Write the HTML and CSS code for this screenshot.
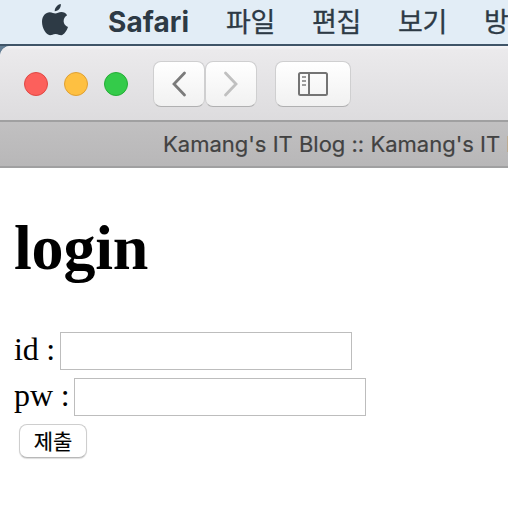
FILE: index.html
```html
<!DOCTYPE html>
<html lang="ko">
<head>
<meta charset="utf-8">
<title>login</title>
<link rel="stylesheet" href="styles.css">
</head>
<body>
<nav class="menubar">
  <svg class="apple" viewBox="0 0 26 32" width="26" height="32"><path d="M12.7 7.2C12.8 3.5 15.6.5 18.8 0C19.2 3.8 16.3 7.2 12.7 7.2ZM13.3 9.5C15 9.5 16.8 8.1 19.4 8.1C21.8 8.1 23.9 9.3 25.1 11.2C20.1 14.2 20.7 20.8 26 23C24.9 26.2 22 31.2 19.2 31.2C17.2 31.2 16.2 29.9 13.6 29.9C11 29.9 9.9 31.2 8 31.2C4.5 31.2 0 24.4 0 17.8C0 11.7 3.8 8.2 7.7 8.2C10.2 8.2 11.9 9.5 13.3 9.5Z"/></svg>
  <strong class="app">Safari</strong>
  <span class="menu">파일</span>
  <span class="menu">편집</span>
  <span class="menu">보기</span>
  <span class="menu">방</span>
</nav>
<div class="desktop">
  <section class="window">
    <header class="toolbar">
      <div class="lights">
        <i class="light red"></i><i class="light yellow"></i><i class="light green"></i>
      </div>
      <div class="history">
        <div class="tool"><svg width="16" height="26" viewBox="0 0 16 26"><path class="back" d="M13.5 2L3 13L13.5 24"/></svg></div>
        <div class="tool"><svg width="16" height="26" viewBox="0 0 16 26"><path class="forward" d="M2.5 2L13 13L2.5 24"/></svg></div>
      </div>
      <div class="tool wide"><svg width="30" height="24" viewBox="0 0 30 24"><rect class="panel" x="1" y="1" width="28" height="22" rx="1.5"/><path class="panel" d="M11 1V23"/><path class="lines" d="M4 5H8M4 9H8M4 13H8"/></svg></div>
    </header>
    <div class="tabbar"><span class="tab">Kamang's IT Blog :: Kamang's IT Blog</span></div>
    <main class="page">
      <h1 class="title">login</h1>
      <form>
        <div class="row"><label class="id" for="id">id :</label><input class="field" id="id" type="text"></div>
        <div class="row"><label class="pw" for="pw">pw :</label><input class="field" id="pw" type="password"></div>
        <button class="submit" type="button">제출</button>
      </form>
    </main>
  </section>
</div>
</body>
</html>
```
FILE: styles.css
```css
* { box-sizing: border-box; }
body {
  margin: 0;
  height: 520px;
  overflow: hidden;
  background: #fff;
  font-family: "Liberation Serif", "Noto Sans CJK KR", serif;
}
.menubar {
  display: flex;
  align-items: center;
  height: 44px;
  padding-left: 42px;
  overflow: hidden;
  background: #e2edf6;
  color: #2d3a45;
  font: 400 27px/42px "Noto Sans CJK KR", sans-serif;
  white-space: nowrap;
}
.apple {
  flex: none;
  margin: 0 40px 4px 0;
  fill: #2d3a45;
}
.app {
  flex: none;
  width: 118px;
  font: 700 28px/44px Inter, sans-serif;
  letter-spacing: 0.1px;
}
.menu {
  flex: none;
  width: 86px;
  margin-top: -2px;
  letter-spacing: -0.3px;
  -webkit-text-stroke: 0.3px #2d3a45;
}
.desktop {
  padding-top: 2px;
  background: linear-gradient(#405568, #405568 2px, #647e94 2px);
}
.window {
  overflow: hidden;
  height: 474px;
  border-top-left-radius: 10px;
  background: #fff;
}
.toolbar {
  display: flex;
  align-items: flex-start;
  height: 76px;
  padding: 15px 0 0 24px;
  border-bottom: 2px solid #a0a0a1;
  background: linear-gradient(#f6f5f7, #ebeaec 4px, #dddcde);
}
.lights {
  display: flex;
  gap: 16px;
  width: 129px;
  padding-top: 11px;
}
.light {
  width: 24px;
  height: 24px;
  border: 1px solid;
  border-radius: 50%;
}
.red { background: #fc605c; border-color: #df4844; }
.yellow { background: #fec041; border-color: #dfa033; }
.green { background: #34cb4a; border-color: #25ad36; }
.history { display: flex; margin-right: 18px; }
.tool {
  display: flex;
  align-items: center;
  justify-content: center;
  width: 52px;
  height: 46px;
  border: 1px solid #cfcfd0;
  border-bottom-color: #b0b0b1;
  border-radius: 8px;
  background: linear-gradient(#fff, #f1f1f1);
}
.wide { width: 76px; }
.tool svg { fill: none; stroke-linecap: round; }
.back { stroke: #7b7b7b; stroke-width: 2.8; }
.forward { stroke: #c0c0c0; stroke-width: 2.8; }
.panel { stroke: #747474; stroke-width: 2; }
.lines { stroke: #9b9b9b; stroke-width: 2; stroke-linecap: butt; }
.tabbar {
  height: 46px;
  padding-left: 163px;
  overflow: hidden;
  border-bottom: 2px solid #a0a0a1;
  background: linear-gradient(#c1c0c1, #b8b7b8);
  color: #424242;
  font: 400 22px/45px Inter, sans-serif;
  white-space: nowrap;
}
.tab {
  letter-spacing: 0;
  font-feature-settings: "calt" 0;
  -webkit-text-stroke: 0.2px #424242;
}
.page { padding: 43px 14px 0; color: #000; }
.title {
  margin: 0 0 47px;
  font-size: 64px;
  line-height: 74px;
  letter-spacing: -0.2px;
}
.row {
  display: flex;
  height: 38px;
  margin-bottom: 8px;
  font-size: 32px;
  line-height: 34px;
}
.id { width: 46px; letter-spacing: -0.2px; }
.pw { width: 60px; letter-spacing: -0.1px; }
.field {
  width: 292px;
  height: 38px;
  padding: 4px;
  border: 1px solid #bdbdbd;
  border-radius: 0;
  outline: 0;
  background: #fff;
}
.submit {
  display: block;
  width: 68px;
  height: 34px;
  margin-left: 5px;
  padding: 0 0 2px;
  border: 1px solid #cecece;
  border-bottom-color: #b8b8b8;
  border-radius: 8px;
  background: #fff;
  box-shadow: 0 1px 1px #ddd;
  color: #000;
  font: 400 21px/30px "Noto Sans CJK KR", sans-serif;
  -webkit-text-stroke: 0.2px #000;
}
```
